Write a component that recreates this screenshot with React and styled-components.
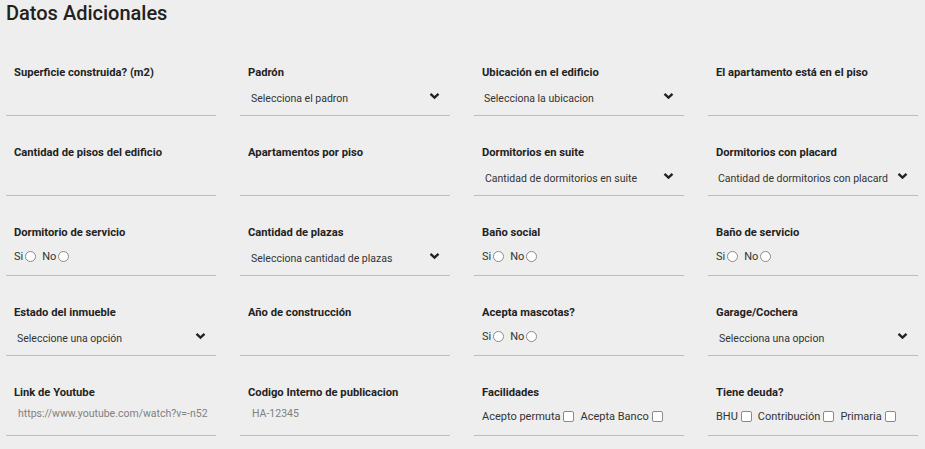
import React from "react";
import styled, { createGlobalStyle } from "styled-components";

const GlobalStyle = createGlobalStyle`
  html, body {
    margin: 0;
    padding: 0;
    background: #eeeeee;
  }
  body {
    font-family: Roboto, "Liberation Sans", Arial, sans-serif;
    color: #222;
  }
`;

const fields = [
  { label: "Superficie construida? (m2)", type: "input", value: "" },
  { label: "Padrón", type: "select", value: "Selecciona el padron", indent: 11 },
  { label: "Ubicación en el edificio", type: "select", value: "Selecciona la ubicacion", indent: 10 },
  { label: "El apartamento está en el piso", type: "input", value: "" },
  { label: "Cantidad de pisos del edificio", type: "input", value: "" },
  { label: "Apartamentos por piso", type: "input", value: "" },
  { label: "Dormitorios en suite", type: "select", value: "Cantidad de dormitorios en suite", indent: 11 },
  { label: "Dormitorios con placard", type: "select", value: "Cantidad de dormitorios con placard", indent: 10 },
  { label: "Dormitorio de servicio", type: "radio" },
  { label: "Cantidad de plazas", type: "select", value: "Selecciona cantidad de plazas", indent: 11 },
  { label: "Baño social", type: "radio" },
  { label: "Baño de servicio", type: "radio" },
  { label: "Estado del inmueble", type: "select", value: "Seleccione una opción", indent: 11 },
  { label: "Año de construcción", type: "input", value: "" },
  { label: "Acepta mascotas?", type: "radio" },
  { label: "Garage/Cochera", type: "select", value: "Selecciona una opcion", indent: 11 },
  { label: "Link de Youtube", type: "input", value: "https://www.youtube.com/watch?v=-n52" },
  { label: "Codigo Interno de publicacion", type: "input", value: "HA-12345" },
  { label: "Facilidades", type: "check", options: ["Acepto permuta", "Acepta Banco"] },
  { label: "Tiene deuda?", type: "check", options: ["BHU", "Contribución", "Primaria"] },
];

export default function App() {
  return (
    <>
      <GlobalStyle />
      <Page>
        <Title>Datos Adicionales</Title>
        <Grid>
          {fields.map((f, i) => (
            <Field key={i}>
              <Label>{f.label}</Label>
              <Control>
                {f.type === "select" && (
                  <SelectBox $indent={f.indent}>
                    <span>{f.value}</span>
                    <Chevron />
                  </SelectBox>
                )}
                {f.type === "input" && <TextValue>{f.value}</TextValue>}
                {f.type === "radio" && (
                  <Options>
                    <Option>
                      Si<Radio />
                    </Option>
                    <Option>
                      No<Radio />
                    </Option>
                  </Options>
                )}
                {f.type === "check" && (
                  <Options>
                    {f.options.map((o) => (
                      <Option key={o}>
                        {o}
                        <Check />
                      </Option>
                    ))}
                  </Options>
                )}
              </Control>
            </Field>
          ))}
        </Grid>
      </Page>
    </>
  );
}

function Chevron() {
  return (
    <ChevronIcon width="11" height="8" viewBox="0 0 11 8">
      <path d="M1.5 1.8 L5.5 5.6 L9.5 1.8" fill="none" stroke="#222" strokeWidth="2.4" />
    </ChevronIcon>
  );
}

const Page = styled.div`
  padding: 0 7px 0 6px;
`;

const Title = styled.h2`
  margin: 0 0 11px;
  padding-top: 1px;
  font-size: 20px;
  line-height: 24px;
  font-weight: 500;
  color: #212121;
`;

const Grid = styled.div`
  display: grid;
  grid-template-columns: repeat(4, 210px);
  column-gap: 24px;
`;

const Field = styled.div`
  padding: 29px 0 5px;
  border-bottom: 1px solid #bdbdbd;
  display: flex;
  flex-direction: column;
  min-width: 0;
`;

const Label = styled.div`
  padding-left: 8px;
  font-size: 11.2px;
  line-height: 16px;
  font-weight: 700;
  color: #222;
`;

const Control = styled.div`
  margin-top: 5px;
  height: 24px;
  display: flex;
  align-items: center;
`;

const SelectBox = styled.div`
  flex: 1;
  display: flex;
  align-items: center;
  justify-content: space-between;
  padding-left: ${(p) => p.$indent || 10}px;
  padding-right: 10px;
  font-size: 10.5px;
  color: #333;
  white-space: nowrap;
`;

const ChevronIcon = styled.svg`
  display: block;
  margin-top: -4px;
  flex-shrink: 0;
`;

const TextValue = styled.div`
  padding-left: 12px;
  margin-top: -10px;
  font-size: 10.5px;
  color: #808080;
  white-space: nowrap;
  overflow: hidden;
`;

const Options = styled.div`
  display: flex;
  align-items: center;
  gap: 6px;
  padding-left: 8px;
  margin-top: -4px;
  font-size: 11px;
  color: #333;
`;

const Option = styled.label`
  display: flex;
  align-items: center;
  gap: 2px;
`;

const Radio = styled.span`
  width: 9px;
  height: 9px;
  border: 1px solid #8a8a8a;
  border-radius: 50%;
  background: #fff;
`;

const Check = styled.span`
  width: 9px;
  height: 9px;
  border: 1px solid #8a8a8a;
  border-radius: 2px;
  background: #fff;
  margin-left: 1px;
`;
